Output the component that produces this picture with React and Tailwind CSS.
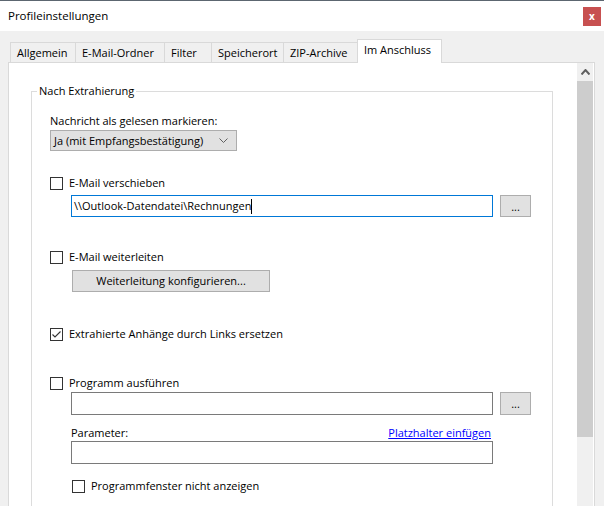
import { useState } from "react";

// tabs with their measured widths
const tabs = [
  { label: "Allgemein", w: "w-[65px]" },
  { label: "E-Mail-Ordner", w: "w-[89px]" },
  { label: "Filter", w: "w-[47px]" },
  { label: "Speicherort", w: "w-[72px]" },
  { label: "ZIP-Archive", w: "w-[74px]" },
];

function CheckBox({ checked }) {
  return (
    <span className="w-[13px] h-[13px] border border-[#333333] bg-white flex items-center justify-center shrink-0">
      {checked && (
        <svg width="11" height="11" viewBox="0 0 11 11">
          <path d="M1.5 5.5 L4 8 L9.5 2.5" fill="none" stroke="#333333" strokeWidth="1.1" />
        </svg>
      )}
    </span>
  );
}

function CheckRow({ label, checked, className = "" }) {
  return (
    <div className={"flex items-center h-4 gap-[6px] " + className}>
      <CheckBox checked={checked} />
      <span>{label}</span>
    </div>
  );
}

function DotsButton({ h }) {
  return (
    <div className={"ml-[7px] w-[31px] border border-[#adadad] bg-[#e1e1e1] flex items-center justify-center " + h}>
      <span className="leading-none">...</span>
    </div>
  );
}

export default function App() {
  const [checked] = useState(true);

  return (
    <div className="w-[604px] h-[506px] overflow-hidden bg-[#f0f0f0] flex flex-col border-t border-[#5c6670] text-black font-['Open_Sans',sans-serif] text-[11px] leading-4">
      {/* title bar */}
      <div className="h-[30px] bg-white flex items-center justify-between pl-2 pr-[3px] shrink-0">
        <span className="text-[11.5px]">Profileinstellungen</span>
        <div className="w-[18px] h-[19px] bg-[#c75050] text-white flex items-center justify-center text-[10px] font-bold leading-none pb-[1px]">
          x
        </div>
      </div>

      {/* tab strip */}
      <div className="flex items-end h-[31px] ml-[10px] shrink-0">
        {tabs.map((t) => (
          <div
            key={t.label}
            className={"h-[20px] border-t border-l border-[#d9d9d9] bg-[#f0f0f0] pl-[6px] flex items-center " + t.w}
          >
            {t.label}
          </div>
        ))}
        <div className="relative z-10 -mb-px h-[24px] w-[85px] border border-b-0 border-[#d9d9d9] bg-white pl-[6px] pb-[3px] flex items-center">
          Im Anschluss
        </div>
      </div>

      {/* tab page */}
      <div className="ml-2 w-[587px] flex-1 border border-[#d9d9d9] bg-white flex">
        <div className="flex-1 min-w-0">
          {/* group box */}
          <div className="relative ml-[22px] mt-[28px] w-[522px] h-[500px] border border-[#dcdcdc] pl-[18px]">
            <span className="absolute -top-[9px] left-[5px] bg-white px-[2px]">Nach Extrahierung</span>

            <div className="mt-[21px]">Nachricht als gelesen markieren:</div>
            <div className="mt-[1px] w-[187px] h-[21px] border border-[#adadad] bg-[#e1e1e1] flex items-center justify-between pl-[3px] pr-[8px]">
              <span>Ja (mit Empfangsbestätigung)</span>
              <svg width="9" height="5" viewBox="0 0 9 5">
                <path d="M0.5 0.5 L4.5 4.5 L8.5 0.5" fill="none" stroke="#606060" strokeWidth="1" />
              </svg>
            </div>

            <CheckRow label="E-Mail verschieben" className="mt-[24px]" />
            <div className="mt-[4px] flex">
              <div className="ml-[21px] w-[422px] h-[22px] border border-[#0078d7] bg-white flex items-center pl-[2px]">
                <span>{"\\\\Outlook-Datendatei\\Rechnungen"}</span>
                <span className="w-px h-[15px] bg-black" />
              </div>
              <DotsButton h="h-[22px]" />
            </div>

            <CheckRow label="E-Mail weiterleiten" className="mt-[32px]" />
            <div className="mt-[5px] ml-[22px] w-[198px] h-[22px] border border-[#adadad] bg-[#e1e1e1] flex items-center justify-center">
              Weiterleitung konfigurieren...
            </div>

            <CheckRow label="Extrahierte Anhänge durch Links ersetzen" checked={checked} className="mt-[34px]" />

            <CheckRow label="Programm ausführen" className="mt-[33px]" />
            <div className="mt-[1px] flex">
              <div className="ml-[21px] w-[422px] h-[23px] border border-[#7a7a7a] bg-white" />
              <DotsButton h="h-[23px]" />
            </div>

            <div className="mt-[10px] ml-[21px] w-[420px] flex justify-between">
              <span>Parameter:</span>
              <span className="text-[#0000ff] underline">Platzhalter einfügen</span>
            </div>
            <div className="ml-[21px] w-[422px] h-[23px] border border-[#7a7a7a] bg-white" />

            <CheckRow label="Programmfenster nicht anzeigen" className="mt-[14px] ml-[22px] gap-[5px]" />
          </div>
        </div>

        {/* scrollbar */}
        <div className="w-4 mr-px bg-[#f0f0f0] flex flex-col">
          <div className="h-[18px] flex items-center justify-center">
            <svg width="9" height="6" viewBox="0 0 9 6">
              <path d="M0.5 5.5 L4.5 1 L8.5 5.5" fill="none" stroke="#606060" strokeWidth="2" />
            </svg>
          </div>
          <div className="h-[356px] bg-[#cdcdcd]" />
        </div>
      </div>
    </div>
  );
}
